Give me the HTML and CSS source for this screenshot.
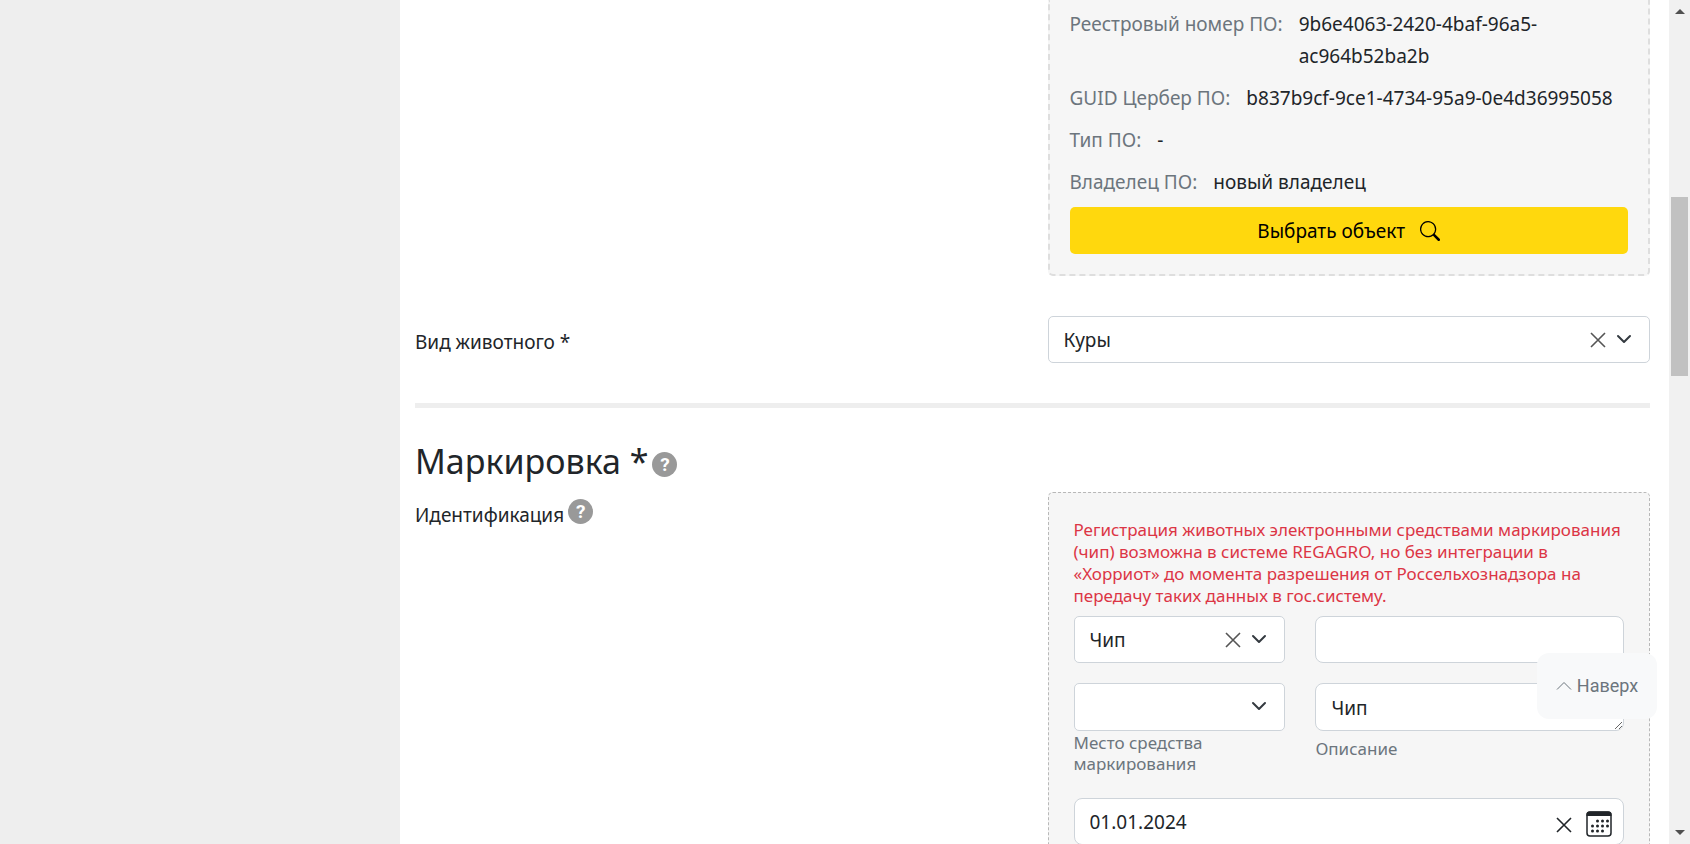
FILE: index.html
```html
<!DOCTYPE html>
<html lang="ru">
<head>
<meta charset="utf-8">
<meta name="viewport" content="width=device-width, initial-scale=1">
<title>Регистрация животного</title>
<link rel="stylesheet" href="styles.css">
</head>
<body>
<svg class="sprite" aria-hidden="true">
  <symbol id="close" viewBox="0 0 16 16"><path d="M1 1l14 14M15 1L1 15" fill="none" stroke="currentColor" stroke-width="1.6"/></symbol>
  <symbol id="chevron" viewBox="0 0 16 16"><path d="M2 5l6 6 6-6" fill="none" stroke="currentColor" stroke-width="2" stroke-linecap="round" stroke-linejoin="round"/></symbol>
</svg>
<div class="layout">
  <aside class="sidebar"></aside>
  <main class="content">
    <section class="row">
      <div class="col"></div>
      <div class="col">
        <div class="object-card">
          <dl class="facts">
            <div class="fact"><dt>Реестровый номер ПО:</dt><dd>9b6e4063-2420-4baf-96a5-ac964b52ba2b</dd></div>
            <div class="fact"><dt>GUID Цербер ПО:</dt><dd>b837b9cf-9ce1-4734-95a9-0e4d36995058</dd></div>
            <div class="fact"><dt>Тип ПО:</dt><dd>-</dd></div>
            <div class="fact"><dt>Владелец ПО:</dt><dd>новый владелец</dd></div>
          </dl>
          <button type="button" class="pick">Выбрать объект
            <svg class="pick-icon" viewBox="0 0 16 16" fill="currentColor" aria-hidden="true"><path d="M11.742 10.344a6.5 6.5 0 1 0-1.397 1.398h-.001c.03.04.062.078.098.115l3.85 3.85a1 1 0 0 0 1.415-1.414l-3.85-3.85a1.007 1.007 0 0 0-.115-.1zM12 6.5a5.5 5.5 0 1 1-11 0 5.5 5.5 0 0 1 11 0z"/></svg>
          </button>
        </div>
      </div>
    </section>

    <section class="row">
      <div class="col"><label class="label" for="species">Вид животного *</label></div>
      <div class="col">
        <div class="control">
          <select id="species" class="field"><option>Куры</option></select>
          <button type="button" class="clear" aria-label="Очистить"><svg class="cross"><use href="#close"/></svg></button>
          <svg class="chevron" aria-hidden="true"><use href="#chevron"/></svg>
        </div>
      </div>
    </section>

    <hr class="divider">

    <h2 class="title">Маркировка * <button type="button" class="help" aria-label="Справка: маркировка">?</button></h2>

    <section class="row">
      <div class="col ident">Идентификация <button type="button" class="help" aria-label="Справка: идентификация">?</button></div>
      <div class="col">
        <div class="mark-card">
          <p class="warning">Регистрация животных электронными средствами маркирования (чип) возможна в системе REGAGRO, но без интеграции в «Хорриот» до момента разрешения от Россельхознадзора на передачу таких данных в гос.систему.</p>
          <div class="grid">
            <div class="narrow control">
              <select class="field" aria-label="Средство маркирования"><option>Чип</option></select>
              <button type="button" class="clear" aria-label="Очистить"><svg class="cross"><use href="#close"/></svg></button>
              <svg class="chevron" aria-hidden="true"><use href="#chevron"/></svg>
            </div>
            <div class="wide"><input class="field round" type="text" aria-label="Номер"></div>
            <div class="narrow">
              <div class="control">
                <select id="place" class="field tall"><option></option></select>
                <svg class="chevron" aria-hidden="true"><use href="#chevron"/></svg>
              </div>
              <label class="hint" for="place">Место средства маркирования</label>
            </div>
            <div class="wide">
              <textarea id="descr" class="field round tall" rows="1">Чип</textarea>
              <label class="hint spaced" for="descr">Описание</label>
            </div>
          </div>
          <div class="control date">
            <input class="field round" type="text" value="01.01.2024" aria-label="Дата">
            <button type="button" class="clear dark" aria-label="Очистить дату"><svg class="cross"><use href="#close"/></svg></button>
            <button type="button" class="calendar" aria-label="Календарь">
              <svg class="calendar-icon" viewBox="0 0 26 26" aria-hidden="true">
                <rect x="1" y="1" width="24" height="24" rx="3" fill="#fff" stroke="#212529" stroke-width="1.5"/>
                <path d="M.5 5V3.500a3 3 0 0 1 3-3h19a3 3 0 0 1 3 3V5z" fill="#212529"/>
                <path d="M11.500 10h0M16.500 10h0M21.500 10h0M6.500 15h0M11.500 15h0M16.500 15h0M21.500 15h0M6.500 20h0M11.500 20h0M16.500 20h0" stroke="#212529" stroke-width="3" stroke-linecap="round"/>
              </svg>
            </button>
          </div>
        </div>
      </div>
    </section>
  </main>
  <div class="scrollbar" aria-hidden="true">
    <svg class="arrow" viewBox="0 0 10 5"><path d="M0 5l5-5 5 5z"/></svg>
    <div class="rail"><div class="thumb"></div></div>
    <svg class="arrow" viewBox="0 0 10 5"><path d="M0 0l5 5 5-5z"/></svg>
  </div>
</div>
<button type="button" class="to-top"><svg class="to-top-icon" viewBox="0 0 16 16" aria-hidden="true"><path d="M1 11.500l7-7 7 7" fill="none" stroke="currentColor"/></svg>Наверх</button>
</body>
</html>
```

FILE: styles.css
```css
* { box-sizing: border-box; }

body {
  margin: 0;
  height: 100vh;
  overflow: hidden;
  background: #fff;
  color: #212529;
  font: 19px/32px "Noto Sans", "Open Sans", sans-serif;
}

button, input, select, textarea { font: inherit; color: inherit; }
button { padding: 0; border: 0; background: none; cursor: pointer; }
svg { flex: none; }
.sprite { display: none; }

.layout { display: flex; height: 100%; }
.sidebar { flex: 0 0 400px; background: #eee; }
.content { flex: 1; min-width: 0; padding: 0 19px 0 15px; overflow: hidden; }

.row { display: flex; gap: 30px; }
.col { flex: 1; min-width: 0; }

.object-card {
  margin-bottom: 40px;
  padding: 8px 20px 20px;
  border: 2px dashed #dedede;
  border-top: 0;
  border-radius: 0 0 5px 5px;
  background: #f6f6f6;
}
.facts { display: flex; flex-direction: column; gap: 10px; margin: 0 0 9px; }
.fact { display: flex; gap: 16px; }
.fact dt { flex: none; color: #6c757d; }
.fact dd { margin: 0; min-width: 0; }

.pick {
  display: flex;
  align-items: center;
  justify-content: center;
  gap: 15px;
  width: 100%;
  height: 47px;
  border-radius: 5px;
  background: #ffd80d;
  color: #000;
}
.pick-icon { width: 20px; height: 20px; }

.label { display: block; padding-top: 10px; }

.control { position: relative; }
.field {
  display: block;
  width: 100%;
  height: 47px;
  margin: 0;
  padding: 0 15px;
  border: 1px solid #ced4da;
  border-radius: 5px;
  background: #fff;
  appearance: none;
}
.round { border-radius: 8px; }
.tall { height: 48px; }
textarea.field { padding: 8px 15px; resize: vertical; overflow: hidden; }

.clear {
  position: absolute;
  top: 0;
  right: 44px;
  display: flex;
  align-items: center;
  height: 47px;
  color: #555;
}
.clear.dark { right: 52px; top: 3px; color: #212529; }
.cross { width: 16px; height: 16px; }
.chevron {
  position: absolute;
  top: 15px;
  right: 18px;
  width: 16px;
  height: 16px;
  color: #343a40;
  pointer-events: none;
}

.divider { height: 5px; margin: 40px 0 33px; border: 0; background: #eee; }

.title {
  display: flex;
  align-items: center;
  gap: 4px;
  margin: 0 0 10px;
  font-size: 34px;
  font-weight: 400;
  line-height: 41px;
}
.help {
  width: 25px;
  height: 25px;
  border-radius: 50%;
  background: #999;
  color: #fff;
  font: 700 19px/25px Roboto, sans-serif;
}
.title .help { margin-top: 5px; }
.ident { display: flex; align-items: flex-start; gap: 4px; padding-top: 7px; }

.mark-card {
  padding: 26px 25px 25px;
  border: 1px dashed #b8b8b8;
  border-radius: 5px;
  background: #f6f6f6;
}
.warning { margin: 0 0 9px; color: #dc3545; font-size: 17px; line-height: 22px; }
.grid {
  display: grid;
  grid-template-columns: repeat(12, minmax(0, 1fr));
  gap: 20px 30px;
}
.narrow { grid-column: span 5; }
.wide { grid-column: span 7; }
.hint { display: block; padding-top: 1px; color: #6c757d; font-size: 17px; line-height: 21px; }
.hint.spaced { padding-top: 7px; }

.date { margin-top: 24px; }
.calendar { position: absolute; top: 13px; right: 12px; height: 26px; }
.calendar-icon { display: block; width: 26px; height: 26px; }

.scrollbar {
  display: flex;
  flex: 0 0 21px;
  flex-direction: column;
  align-items: center;
  padding: 9px 2px;
  background: #f1f1f1;
}
.arrow { width: 10px; height: 5px; fill: #505050; }
.rail { flex: 1; width: 17px; padding-top: 183px; }
.thumb { height: 179px; background: #c1c1c1; }

.to-top {
  position: fixed;
  right: 33px;
  bottom: 125px;
  display: flex;
  align-items: center;
  justify-content: center;
  gap: 5px;
  width: 120px;
  height: 66px;
  border-radius: 12px;
  background: #f8f9fa;
  color: #6c757d;
  font: 18px/24px Roboto, sans-serif;
}
.to-top-icon { width: 16px; height: 16px; }
```
